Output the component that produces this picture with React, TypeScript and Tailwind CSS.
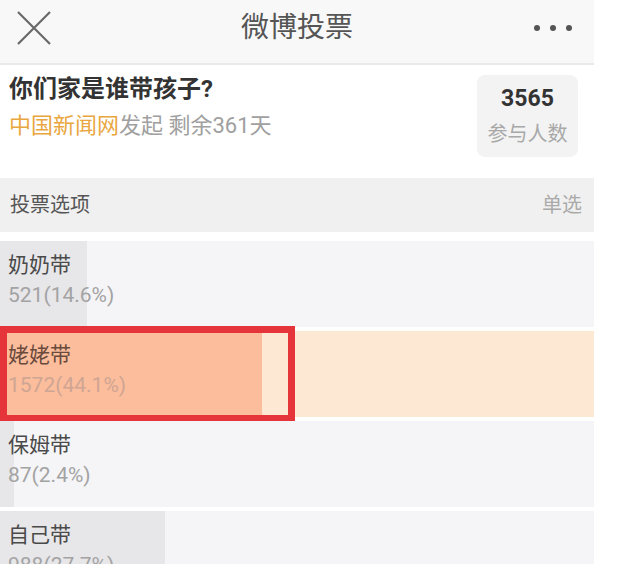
import React from 'react';

// Варианты голосования
interface Option {
  label: string;
  count: number;
  pct: number;
  highlight?: boolean;
}

const options: Option[] = [
  { label: '奶奶带', count: 521, pct: 14.6 },
  { label: '姥姥带', count: 1572, pct: 44.1, highlight: true },
  { label: '保姆带', count: 87, pct: 2.4 },
  { label: '自己带', count: 988, pct: 27.7 },
];

const font = { fontFamily: 'Roboto, "Noto Sans CJK SC", "Noto Sans", sans-serif' };

function OptionRow({ option }: { option: Option }) {
  const hi = option.highlight;
  return (
    <div className={`relative h-[86px] shrink-0 ${hi ? 'bg-[#fde9d3]' : 'bg-[#f5f5f7]'}`}>
      {/* Полоса процента */}
      <div
        className={`absolute left-0 top-0 bottom-0 ${hi ? 'bg-[#fcbd9c]' : 'bg-[#e7e6e9]'}`}
        style={{ width: `${option.pct}%` }}
      />
      <div className="relative pl-[8px] pt-[9px] flex flex-col">
        <span className={`text-[21px] leading-[30px] ${hi ? 'text-[#6a4a3c]' : 'text-[#4a4a4a]'}`}>
          {option.label}
        </span>
        <span className={`text-[21px] leading-[30px] ${hi ? 'text-[#cfa593]' : 'text-[#a3a3a3]'}`}>
          {option.count}({option.pct}%)
        </span>
      </div>
      {/* Красная рамка-выделение */}
      {hi && (
        <div className="absolute left-0 top-[-5px] w-[295px] h-[96px] border-[7px] border-[#e5343a]" />
      )}
    </div>
  );
}

export default function App() {
  return (
    <div className="w-[640px] h-[564px] bg-white overflow-hidden" style={font}>
      <div className="w-[594px] flex flex-col">
        {/* Шапка */}
        <div className="h-[65px] bg-[#f8f8f8] border-b-2 border-[#e9e9e9] flex items-center justify-between pl-[16px] pr-[22px] pb-[8px]">
          <svg width="36" height="36" viewBox="0 0 36 36">
            <path d="M2 2 L34 34 M34 2 L2 34" stroke="#6a6a6a" strokeWidth="2.2" fill="none" />
          </svg>
          <span className="text-[28px] text-[#555] ml-[8px]">微博投票</span>
          <div className="flex gap-[10px]">
            <span className="w-[6px] h-[6px] rounded-full bg-[#555]" />
            <span className="w-[6px] h-[6px] rounded-full bg-[#555]" />
            <span className="w-[6px] h-[6px] rounded-full bg-[#555]" />
          </div>
        </div>

        {/* Заголовок опроса */}
        <div className="h-[113px] bg-white flex items-start justify-between pl-[9px] pr-[16px]">
          <div className="flex flex-col pt-[8px]">
            <span className="text-[24px] font-bold text-[#333] leading-[32px]">你们家是谁带孩子?</span>
            <span className="text-[22px] leading-[32px] mt-[5px] text-[#a0a0a0]">
              <span className="text-[#e9a73f]">中国新闻网</span>发起 剩余361天
            </span>
          </div>
          <div className="mt-[10px] w-[101px] h-[82px] rounded-[8px] bg-[#f3f3f3] flex flex-col items-center justify-center">
            <span className="text-[23px] font-bold text-[#333] leading-[28px]">3565</span>
            <span className="text-[20px] text-[#a8a8a8] leading-[28px] mt-[7px]">参与人数</span>
          </div>
        </div>

        {/* Секция вариантов */}
        <div className="h-[54px] bg-[#f0f0f0] flex items-center justify-between pl-[10px] pr-[12px]">
          <span className="text-[20px] text-[#555]">投票选项</span>
          <span className="text-[20px] text-[#aaa]">单选</span>
        </div>

        <div className="flex flex-col gap-[4px] mt-[9px]">
          {options.map((o) => (
            <OptionRow key={o.label} option={o} />
          ))}
        </div>
      </div>
    </div>
  );
}
